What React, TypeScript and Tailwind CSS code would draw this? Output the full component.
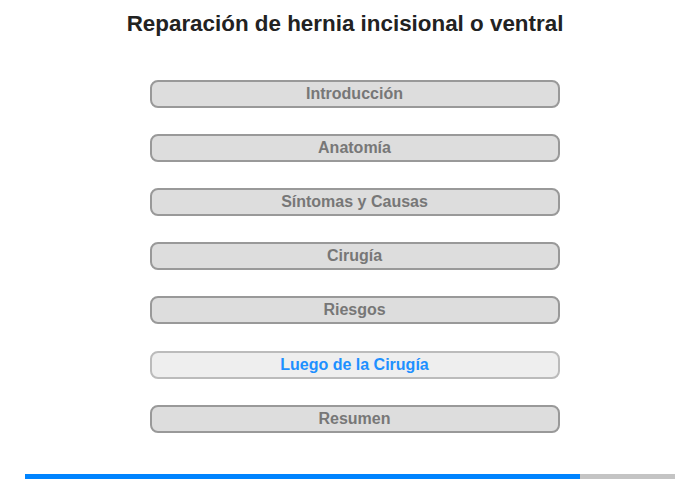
import React from "react";

const items = [
  "Introducción",
  "Anatomía",
  "Síntomas y Causas",
  "Cirugía",
  "Riesgos",
  "Luego de la Cirugía",
  "Resumen",
];

export default function App() {
  return (
    <div className="w-[700px] h-[480px] bg-white flex flex-col items-center" style={{ fontFamily: '"Liberation Sans", Arial, sans-serif' }}>
      <h1 className="mt-[11px] h-[26px] text-[22.4px] leading-[26px] font-bold text-[#222222] ml-[-10px]">
        Reparación de hernia incisional o ventral
      </h1>
      <div className="mt-[43px] flex flex-col gap-[26.12px] ml-[9px]">
        {items.map((t, i) => {
          const active = i === 5;
          return (
            <div
              key={t}
              className={
                active
                  ? "w-[410px] h-[28px] rounded-[8px] border-2 border-[#bbbbbb] bg-[#eeeeee] flex items-center justify-center text-[16px] font-bold text-[#1e90ff]"
                  : "w-[410px] h-[28px] rounded-[8px] border-2 border-[#999999] bg-[#dddddd] flex items-center justify-center text-[16px] font-bold text-[#777777]"
              }
            >
              {t}
            </div>
          );
        })}
      </div>
      <div className="mt-[41px] w-[650px] h-[5px] bg-[#c4c4c4] flex">
        <div className="w-[555px] h-full bg-[#0084ff]" />
      </div>
    </div>
  );
}
